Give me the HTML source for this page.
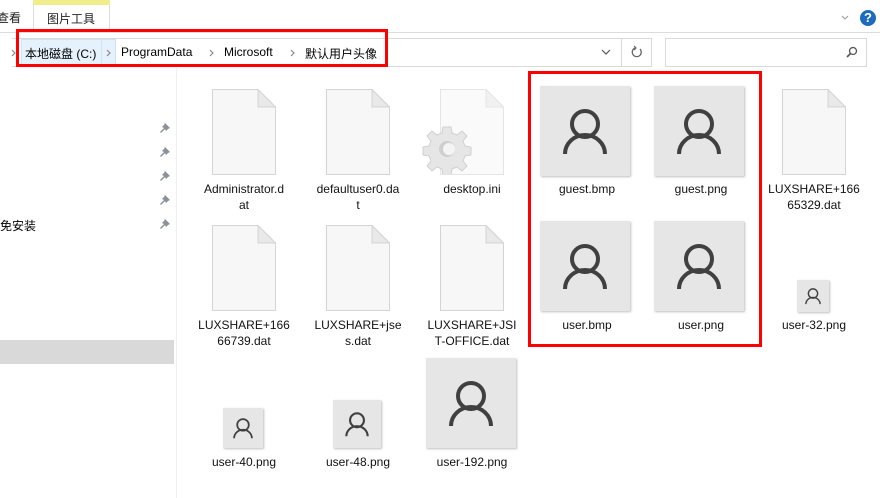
<!DOCTYPE html>
<html><head><meta charset="utf-8"><style>
*{margin:0;padding:0;box-sizing:border-box}
body{width:880px;height:498px;background:#fff;position:relative;overflow:hidden;font-family:"Liberation Sans","Noto Sans CJK SC",sans-serif;font-size:12px;color:#000}
.a{position:absolute}
.lbl{position:absolute;width:110px;text-align:center;font-size:12px;line-height:16px;color:#111}
.doc{position:absolute;width:64px;height:86px}
.th{position:absolute;background:#e6e6e6;box-shadow:1px 1px 2px rgba(0,0,0,.25)}
.th svg{width:100%;height:100%;display:block}
.chev{position:absolute;top:49px}
</style></head><body>
<div class="a" style="left:-3px;top:9px;font-size:12px;color:#222">查看</div>
<div class="a" style="left:33px;top:0;width:77px;height:33px;border-left:1px solid #ddd;border-right:1px solid #ddd;background:#fff"></div>
<div class="a" style="left:33px;top:0;width:77px;height:5px;background:#f0ee8c"></div>
<div class="a" style="left:47px;top:10px;font-size:12px;color:#222">图片工具</div>
<div class="a" style="left:0;top:32px;width:880px;height:1px;background:#dcdcdc"></div>
<svg class="a" style="left:841px;top:15px" width="8" height="6"><path d="M1 1 L4 4 L7 1" fill="none" stroke="#999" stroke-width="1"/></svg>
<div class="a" style="left:860px;top:10px;width:16px;height:16px;border-radius:50%;background:#1e6ac0;color:#fff;font-weight:bold;font-size:13px;text-align:center;line-height:16px">?</div>
<div class="a" style="left:12px;top:38px;width:640px;height:29px;border:1px solid #d9d9d9;border-left:none"></div>
<div class="a" style="left:21px;top:39px;width:95px;height:28px;background:#e5f1fb;border:1px solid #cce4f7"></div>
<div class="a" style="left:101px;top:39px;width:1px;height:28px;background:#cce4f7"></div>
<svg class="chev" style="left:11px" width="6" height="8"><path d="M1 1 L4 4 L1 7" fill="none" stroke="#888" stroke-width="1.2"/></svg>
<div class="a" style="left:25px;top:45px;font-size:12px">本地磁盘 (C:)</div>
<svg class="chev" style="left:106px" width="6" height="8"><path d="M1 1 L4 4 L1 7" fill="none" stroke="#888" stroke-width="1.2"/></svg>
<div class="a" style="left:121px;top:45px;font-size:12px">ProgramData</div>
<svg class="chev" style="left:209px" width="6" height="8"><path d="M1 1 L4 4 L1 7" fill="none" stroke="#888" stroke-width="1.2"/></svg>
<div class="a" style="left:224px;top:45px;font-size:12px">Microsoft</div>
<svg class="chev" style="left:290px" width="6" height="8"><path d="M1 1 L4 4 L1 7" fill="none" stroke="#888" stroke-width="1.2"/></svg>
<div class="a" style="left:305px;top:45px;font-size:12px">默认用户头像</div>
<div class="a" style="left:621px;top:38px;width:1px;height:29px;background:#d9d9d9"></div>
<svg class="a" style="left:601px;top:48px" width="10" height="8"><path d="M1 2 L5 6 L9 2" fill="none" stroke="#555" stroke-width="1.2"/></svg>
<svg class="a" style="left:630px;top:45px" width="14" height="14"><path d="M10 4 A4.5 4.5 0 1 1 5 3" fill="none" stroke="#666" stroke-width="1.3"/><path d="M4 1 L6 3 L4 5" fill="none" stroke="#666" stroke-width="1.2"/></svg>
<div class="a" style="left:665px;top:38px;width:202px;height:29px;border:1px solid #d9d9d9"></div>
<svg class="a" style="left:845px;top:45px" width="14" height="14"><circle cx="8" cy="6" r="3.5" fill="none" stroke="#555" stroke-width="1.3"/><path d="M5.5 8.5 L2 12" stroke="#555" stroke-width="1.6"/></svg>
<div class="a" style="left:16px;top:29px;width:372px;height:38px;border:3px solid #f00"></div>
<div class="a" style="left:176px;top:68px;width:1px;height:430px;background:#f0f0f0"></div>
<div class="a" style="left:0;top:340px;width:174px;height:24px;background:#d9d9d9"></div>
<div class="a" style="left:0;top:217px;font-size:12px">免安装</div>
<svg width="0" height="0" style="position:absolute"><defs><symbol id="pin" viewBox="0 0 12 12"><path d="M6 1 L11 6 L9 7 L7 9 L6 7 L2 11 L1 10 L5 6 L3 5 L5 3 Z" fill="#8a9199"/></symbol>
<symbol id="usr" viewBox="0 0 90 90"><circle cx="45" cy="38" r="13" fill="none" stroke="#404040" stroke-width="4"/><path d="M25 68 A20 19 0 0 1 65 68" fill="none" stroke="#404040" stroke-width="4"/></symbol>
<symbol id="doc" viewBox="0 0 64 86"><path d="M0.5 0.5 H46 L63.5 18 V85.5 H0.5 Z" fill="#f7f7f7" stroke="#d4d4d4"/><path d="M46 0.5 V18 H63.5 Z" fill="#e9e9e9" stroke="#d4d4d4"/></symbol></defs></svg>
<svg class="a" style="left:159px;top:122px" width="12" height="12"><use href="#pin"/></svg>
<svg class="a" style="left:159px;top:146px" width="12" height="12"><use href="#pin"/></svg>
<svg class="a" style="left:159px;top:170px" width="12" height="12"><use href="#pin"/></svg>
<svg class="a" style="left:159px;top:194px" width="12" height="12"><use href="#pin"/></svg>
<svg class="a" style="left:159px;top:218px" width="12" height="12"><use href="#pin"/></svg>
<svg class="doc" style="left:212px;top:89px"><use href="#doc"/></svg>
<div class="lbl" style="left:189px;top:181px">Administrator.d<br>at</div>
<svg class="doc" style="left:326px;top:89px"><use href="#doc"/></svg>
<div class="lbl" style="left:303px;top:181px">defaultuser0.da<br>t</div>
<svg class="doc" style="left:440px;top:89px;opacity:.6"><use href="#doc"/></svg>
<svg class="a" style="left:422px;top:124px" width="50" height="50" viewBox="0 0 50 50"><g fill="#e6e6e6" stroke="#d0d0d0" stroke-width="1"><path d="M21 3h8l1 6 5 2 5-4 5 5-4 5 2 5 6 1v8l-6 1-2 5 4 5-5 5-5-4-5 2-1 6h-8l-1-6-5-2-5 4-5-5 4-5-2-5-6-1v-8l6-1 2-5-4-5 5-5 5 4 5-2z"/></g><circle cx="25" cy="25" r="8" fill="#cfcfcf"/><circle cx="27" cy="25" r="6" fill="#f4f4f4"/></svg>
<div class="lbl" style="left:417px;top:181px">desktop.ini</div>
<div class="a" style="left:528px;top:71px;width:234px;height:276px;border:3px solid #f00"></div>
<div class="th" style="left:540px;top:86px;width:90px;height:90px"><svg><use href="#usr"/></svg></div>
<div class="lbl" style="left:532px;top:181px">guest.bmp</div>
<div class="th" style="left:654px;top:86px;width:90px;height:90px"><svg><use href="#usr"/></svg></div>
<div class="lbl" style="left:646px;top:181px">guest.png</div>
<div class="th" style="left:540px;top:221px;width:90px;height:90px"><svg><use href="#usr"/></svg></div>
<div class="lbl" style="left:532px;top:317px">user.bmp</div>
<div class="th" style="left:654px;top:221px;width:90px;height:90px"><svg><use href="#usr"/></svg></div>
<div class="lbl" style="left:646px;top:317px">user.png</div>
<svg class="doc" style="left:782px;top:89px"><use href="#doc"/></svg>
<div class="lbl" style="left:759px;top:181px">LUXSHARE+166<br>65329.dat</div>
<svg class="doc" style="left:212px;top:225px"><use href="#doc"/></svg>
<div class="lbl" style="left:189px;top:317px">LUXSHARE+166<br>66739.dat</div>
<svg class="doc" style="left:326px;top:225px"><use href="#doc"/></svg>
<div class="lbl" style="left:303px;top:317px">LUXSHARE+jse<br>s.dat</div>
<svg class="doc" style="left:440px;top:225px"><use href="#doc"/></svg>
<div class="lbl" style="left:417px;top:317px">LUXSHARE+JSI<br>T-OFFICE.dat</div>
<div class="th" style="left:797px;top:280px;width:32px;height:32px"><svg viewBox="0 0 90 90"><use href="#usr"/></svg></div>
<div class="lbl" style="left:759px;top:317px">user-32.png</div>
<div class="th" style="left:223px;top:408px;width:40px;height:40px"><svg viewBox="0 0 90 90"><use href="#usr"/></svg></div>
<div class="lbl" style="left:189px;top:454px">user-40.png</div>
<div class="th" style="left:333px;top:400px;width:48px;height:48px"><svg viewBox="0 0 90 90"><use href="#usr"/></svg></div>
<div class="lbl" style="left:303px;top:454px">user-48.png</div>
<div class="th" style="left:426px;top:358px;width:90px;height:90px"><svg><use href="#usr"/></svg></div>
<div class="lbl" style="left:417px;top:454px">user-192.png</div>
</body></html>
